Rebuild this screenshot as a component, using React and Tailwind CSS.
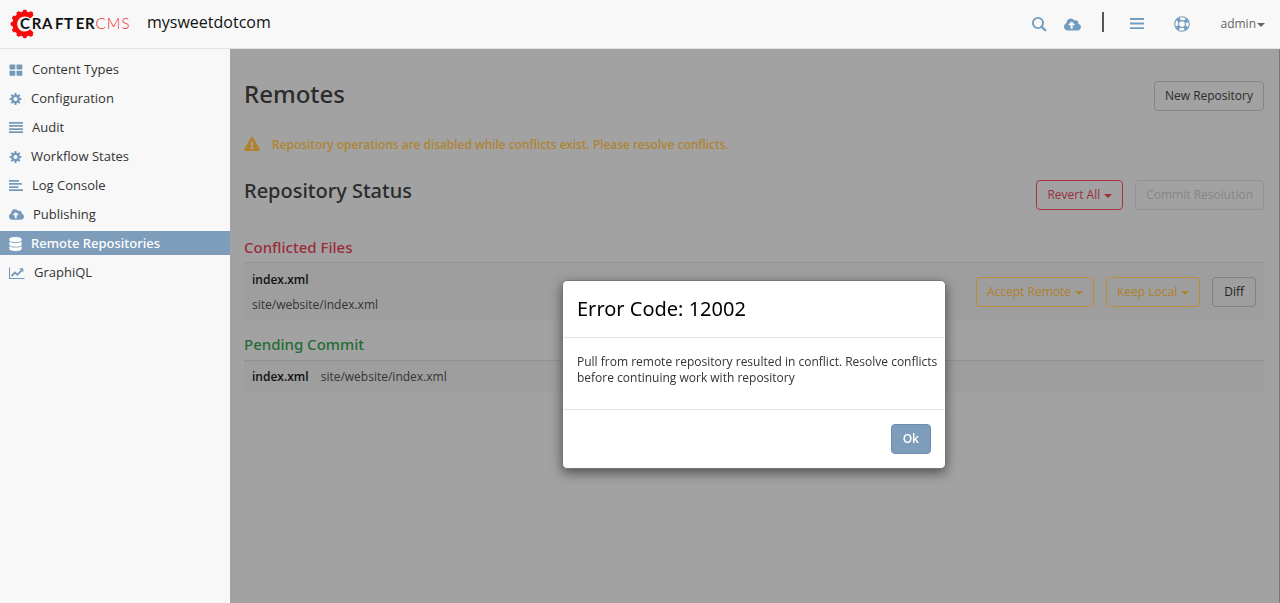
import { FaCloudUploadAlt, FaDatabase, FaExclamationTriangle } from "react-icons/fa";

function Lines({ rows, gap, h }) {
  return (
    <svg viewBox="0 0 14 14" className="size-[14px]" fill="currentColor" aria-hidden="true">
      {rows.map((w, i) => (
        <rect key={i} x="0" y={1 + i * gap} width={w} height={h} rx="0.3" />
      ))}
    </svg>
  );
}

function GridIcon() {
  return (
    <svg viewBox="0 0 14 14" className="size-[14px]" fill="currentColor" aria-hidden="true">
      <rect x="0.5" y="1.5" width="5.8" height="5" rx="0.8" />
      <rect x="7.5" y="1.5" width="5.8" height="5" rx="0.8" />
      <rect x="0.5" y="7.7" width="5.8" height="5" rx="0.8" />
      <rect x="7.5" y="7.7" width="5.8" height="5" rx="0.8" />
    </svg>
  );
}

function CogIcon() {
  return (
    <svg viewBox="0 0 13 14" className="h-[14px] w-[13px]" aria-hidden="true">
      <circle cx="6.5" cy="7" r="3.2" fill="none" stroke="currentColor" strokeWidth="2.3" />
      {[0, 45, 90, 135, 180, 225, 270, 315].map((a) => (
        <path key={a} d="M5.3 3.2 5.7 1h1.6l.4 2.2z" fill="currentColor" transform={`rotate(${a} 6.5 7)`} />
      ))}
    </svg>
  );
}

function ChartIcon() {
  return (
    <svg viewBox="0 0 16 14" className="h-[14px] w-4" fill="none" stroke="currentColor" aria-hidden="true">
      <path d="M.5 1.5v11H15.5" strokeWidth="1.1" />
      <path d="M2.5 10 6 6.5 8.3 8.8 12.5 4.3" strokeWidth="1.8" />
      <path d="M10.2 2.3H14.3V6.4z" fill="currentColor" stroke="none" />
    </svg>
  );
}

function LifeRing() {
  return (
    <svg viewBox="0 0 16 16" className="size-4" fill="none" stroke="currentColor" aria-hidden="true">
      <circle cx="8" cy="8" r="7.3" strokeWidth="1.1" />
      <circle cx="8" cy="8" r="3.4" strokeWidth="1.1" />
      <circle cx="8" cy="8" r="5.3" strokeWidth="3.4" strokeDasharray="3.4 4.925" strokeDashoffset="-2.46" />
    </svg>
  );
}

function SearchIcon() {
  return (
    <svg viewBox="0 0 16 16" className="size-4" fill="none" stroke="currentColor" aria-hidden="true">
      <circle cx="7" cy="7" r="5.1" strokeWidth="1.9" />
      <path d="m10.8 10.8 3.4 3.4" strokeWidth="2.3" strokeLinecap="round" />
    </svg>
  );
}

function Caret() {
  return (
    <svg viewBox="0 0 8 4" className="mt-[2px] h-1 w-2" fill="currentColor" aria-hidden="true">
      <path d="M0 0h8L4 4z" />
    </svg>
  );
}

function Logo() {
  return (
    <a href="#" aria-label="Crafter CMS">
      <svg viewBox="0 0 120 30" className="h-[30px] w-[120px]" aria-hidden="true">
        <path d="M21.9 8A10 10 0 1 0 21.9 22" fill="none" stroke="#f8080d" strokeWidth="4.8" />
        {[60, 90, 120, 150, 180, 210, 240, 270, 300].map((a) => (
          <path key={a} d="M26 13h1.6a1.4 1.4 0 0 1 1.4 1.4v1.2a1.4 1.4 0 0 1-1.4 1.4H26z" fill="#f8080d" transform={`rotate(${a} 14.8 15)`} />
        ))}
        <g fontFamily="Lato, sans-serif" fontSize="15">
          <text fontWeight="700" fill="#111" stroke="#f8f8f8" strokeWidth="2" paintOrder="stroke" x="10" y="20">C</text>
          <text fontWeight="700" fill="#111" x="21.7 32 45 54 65.7 75" y="20">RAFTER</text>
          <text fontWeight="300" fill="#f0252b" x="85.5 96.7 111.5" y="20">CMS</text>
        </g>
      </svg>
    </a>
  );
}

const nav = [
  ["Content Types", <GridIcon />],
  ["Configuration", <CogIcon />],
  ["Audit", <Lines rows={[14, 14, 14, 14]} gap={3.1} h={1.7} />],
  ["Workflow States", <CogIcon />],
  ["Log Console", <Lines rows={[10, 13, 9.5, 14]} gap={3.1} h={1.7} />],
  ["Publishing", <FaCloudUploadAlt className="size-[15px]" />],
  ["Remote Repositories", <FaDatabase className="h-[14px] w-[13px]" />],
  ["GraphiQL", <ChartIcon />],
];

const button = "flex h-[30px] items-center gap-1 rounded-[4px] border whitespace-nowrap";
const amber = "border-[#bd8f3b] px-[10px] text-[#b0812f]";
const title = "font-['Noto_Sans'] font-medium";

export default function App() {
  return (
    <div className="flex min-h-screen flex-col bg-[#f8f8f8] font-['Open_Sans',sans-serif] text-[12px] text-[#333]">
      <header className="flex h-[49px] items-center border-b border-[#e4e4e4] pr-[15px] pl-[10px]">
        <Logo />
        <span className="ml-[17px] pb-1 text-[16px] text-[#111]">mysweetdotcom</span>
        <div className="ml-auto flex items-center text-[#729cc0]">
          <button aria-label="Search"><SearchIcon /></button>
          <button aria-label="Publish" className="ml-[17px]"><FaCloudUploadAlt className="size-[17px]" /></button>
          <span className="mb-1 ml-[21px] h-5 w-[2px] bg-[#555]" />
          <button aria-label="Menu" className="ml-[26px]">
            <Lines rows={[14, 14, 14]} gap={4.6} h={1.9} />
          </button>
          <button aria-label="Help" className="ml-[30px]"><LifeRing /></button>
          <button className="ml-[30px] flex items-center gap-px text-[#666]">admin<Caret /></button>
        </div>
      </header>
      <div className="flex grow">
        <nav className="w-[230px] shrink-0 pt-2">
          <ul className="flex flex-col gap-[5px]">
            {nav.map(([label, icon]) => (
              <li key={label}>
                <a
                  href="#"
                  className={`flex h-6 items-center gap-[9px] pt-px pl-[9px] text-[13px] ${
                    label === "Remote Repositories" ? "bg-[#7e9dbb] font-['Noto_Sans'] font-medium text-white" : ""
                  }`}
                >
                  <span className={label === "Remote Repositories" ? "" : "text-[#7599bb]"}>{icon}</span>
                  {label}
                </a>
              </li>
            ))}
          </ul>
        </nav>
        <main className="grow border-r border-[#777] bg-[#a2a2a2] pr-[15px] pl-[14px]">
          <div className="flex items-start justify-between pt-8">
            <h1 className={`${title} text-[24px] leading-[26px] text-[#2b2b2b]`}>Remotes</h1>
            <button className={`${button} border-[#858585] px-[10px] text-[#2b2b2b]`}>New Repository</button>
          </div>
          <p className="mt-6 flex h-5 items-center gap-3 font-['Noto_Sans'] font-medium text-[#b0822c]">
            <FaExclamationTriangle className="mb-[2px] size-4" />
            Repository operations are disabled while conflicts exist. Please resolve conflicts.
          </p>
          <div className="mt-[21px] flex items-start justify-between">
            <h2 className={`${title} text-[20px] leading-[30px] text-[#2b2b2b]`}>Repository Status</h2>
            <div className="flex gap-3 pt-1">
              <button className={`${button} border-[#a8343f] px-[10px] text-[#992f39]`}>Revert All <Caret /></button>
              <button disabled className={`${button} border-[#929292] px-[10px] text-[#868686]`}>Commit Resolution</button>
            </div>
          </div>
          <h3 className={`${title} mt-[25px] text-[15px] leading-6 text-[#992c3a]`}>Conflicted Files</h3>
          <div className="mt-[3px] flex h-[58px] items-center justify-between border-t border-[#919191] bg-[#9e9e9e] px-2">
            <div className="flex flex-col gap-2">
              <strong className="font-semibold leading-[17px] text-[#111]">index.xml</strong>
              <span className="leading-[17px]">site/website/index.xml</span>
            </div>
            <div className="flex gap-3">
              <button className={`${button} ${amber}`}>Accept Remote <Caret /></button>
              <button className={`${button} ${amber}`}>Keep Local <Caret /></button>
              <button className={`${button} border-[#808080] px-[11px] text-[#222]`}>Diff</button>
            </div>
          </div>
          <h3 className={`${title} mt-[12px] text-[15px] leading-6 text-[#226c35]`}>Pending Commit</h3>
          <div className="mt-[4px] flex h-[32px] items-center gap-3 border-t border-[#919191] bg-[#9e9e9e] px-2">
            <strong className="font-semibold text-[#111]">index.xml</strong>
            <span>site/website/index.xml</span>
          </div>
        </main>
      </div>
      <div className="pointer-events-none fixed inset-0 flex items-start justify-center pt-[280px] pl-[228px]">
        <div role="dialog" aria-labelledby="error-title" className="pointer-events-auto w-[384px] rounded-[5px] border border-[#777] bg-white shadow-[0_4px_12px_rgba(0,0,0,0.5)]">
          <h2 id="error-title" className="border-b border-[#e5e5e5] px-[14px] py-[14px] font-['Noto_Sans'] text-[20px] leading-7 text-black">Error Code: 12002</h2>
          <p className="pt-4 pr-1 pb-[23px] pl-[14px] leading-4">
            Pull from remote repository resulted in conflict. Resolve conflicts before continuing work with repository
          </p>
          <div className="flex justify-end border-t border-[#e5e5e5] p-[14px]">
            <button className={`${button} border-[#6c90b3] bg-[#7e9dbb] px-[11px] font-semibold text-white`}>Ok</button>
          </div>
        </div>
      </div>
    </div>
  );
}
